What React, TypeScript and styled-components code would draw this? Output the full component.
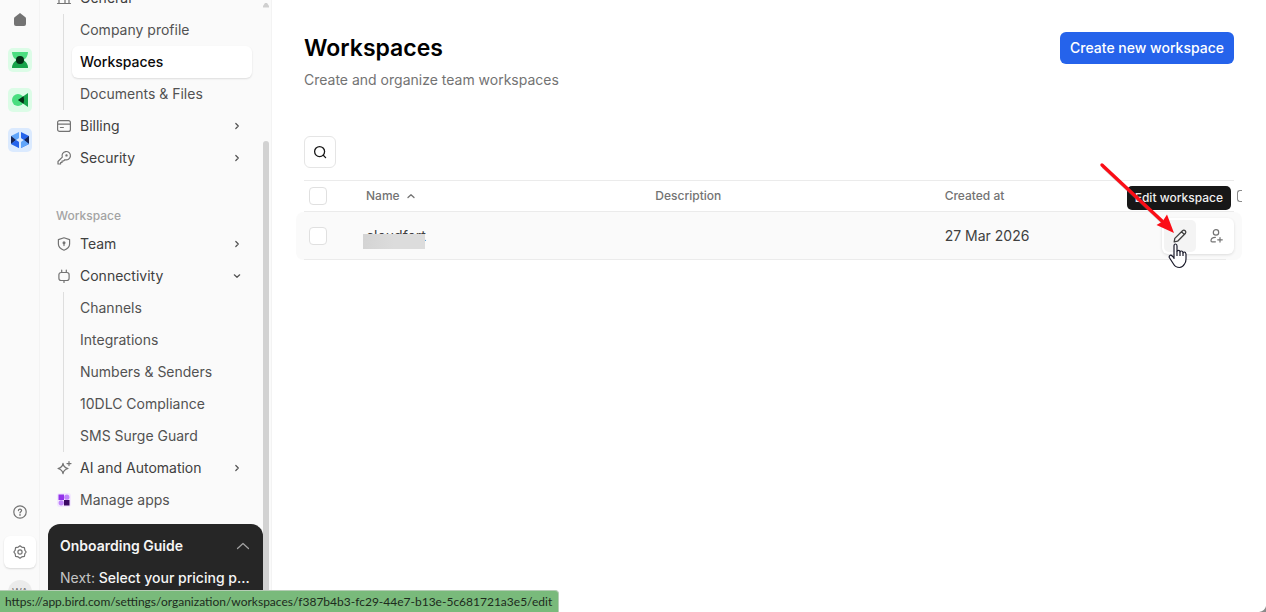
import React from "react";
import styled, { createGlobalStyle, css } from "styled-components";

const GlobalStyle = createGlobalStyle`
  *, *::before, *::after { box-sizing: border-box; }
  body {
    margin: 0;
    background: #ffffff;
    color: #171717;
    font-family: Inter, "Liberation Sans", sans-serif;
    font-size: 14px;
    line-height: 20px;
  }
  button { font: inherit; border: 0; padding: 0; background: none; color: inherit; cursor: pointer; }
  a { color: inherit; text-decoration: none; }
  ul { list-style: none; margin: 0; padding: 0; }
`;

const Shell = styled.div`
  position: relative;
  display: flex;
  height: 100vh;
  overflow: hidden;
`;

/* ---------- icon rail ---------- */

const Rail = styled.nav`
  display: flex;
  flex-direction: column;
  flex: none;
  width: 40px;
  background: #fafafa;
  border-right: 1px solid #f3f3f3;
`;

const RailLink = styled.a`
  display: flex;
  align-items: center;
  justify-content: center;
  flex: none;
  width: 40px;
  height: 40px;
  color: #737373;
`;

const RailSpacer = styled.div`
  flex: 1;
`;

const AppTile = styled.span<{ $tint: string }>`
  display: flex;
  width: 24px;
  height: 24px;
  border-radius: 5px;
  background: ${(p) => p.$tint};
`;

const ActiveTile = styled.span`
  display: flex;
  align-items: center;
  justify-content: center;
  width: 32px;
  height: 32px;
  border-radius: 6px;
  background: #ffffff;
  box-shadow: 0 1px 2px rgba(0, 0, 0, 0.14);
`;

const Avatar = styled.span`
  width: 24px;
  height: 24px;
  border-radius: 50%;
  background: #ebebeb;
  color: #737373;
  font-size: 10px;
  line-height: 24px;
  text-align: center;
`;

/* ---------- sidebar ---------- */

const Sidebar = styled.aside`
  display: flex;
  flex: none;
  width: 232px;
  background: #fafafa;
  border-right: 1px solid #f3f3f3;
`;

const SidebarColumn = styled.div`
  display: flex;
  flex-direction: column;
  flex: 1;
  min-width: 0;
`;

const NavScroll = styled.nav`
  flex: 1;
  min-height: 0;
  overflow: hidden;
  padding: 0 11px 0 8px;
`;

const NavList = styled.ul<{ $scrolled?: boolean }>`
  margin-top: ${(p) => (p.$scrolled ? "-18px" : "0")};
`;

const navRow = css`
  display: flex;
  align-items: center;
  width: 100%;
  height: 32px;
  text-align: left;
`;

const NavButton = styled.button`
  && {
    ${navRow}
    padding: 0 7px 0 8px;
    color: #404040;
  }
`;

const NavLink = styled.a`
  ${navRow}
  padding: 0 8px;
  color: #525252;
`;

const NavIcon = styled.span`
  display: flex;
  flex: none;
  width: 16px;
  margin-right: 8px;
  color: #737373;
`;

const NavText = styled.span`
  flex: 1;
`;

const NavChevron = styled.span`
  display: flex;
  color: #525252;
`;

const SubList = styled.ul`
  margin-left: 15px;
  padding-left: 8px;
  border-left: 1px solid #dedede;
`;

const SubLink = styled.a<{ $active?: boolean }>`
  && {
    display: block;
    height: 32px;
    padding: 0 8px;
    border-radius: 6px;
    line-height: 32px;
    font-weight: ${(p) => (p.$active ? 500 : 400)};
    color: ${(p) => (p.$active ? "#0a0a0a" : "#525252")};
    background: ${(p) => (p.$active ? "#ffffff" : "transparent")};
    box-shadow: ${(p) => (p.$active ? "0 1px 2px rgba(0, 0, 0, 0.12)" : "none")};
  }
`;

const SectionLabel = styled.h2`
  margin: 32px 0 2px;
  padding: 0 8px;
  color: #a3a3a3;
  font-size: 12px;
  font-weight: 500;
  line-height: 20px;
`;

const Guide = styled.section`
  flex: none;
  height: 88px;
  margin-left: 8px;
  padding: 6px 12px 0;
  border-radius: 12px 12px 0 0;
  background: #262626;
  color: #f5f5f5;
`;

const GuideToggle = styled.button`
  && {
    display: flex;
    align-items: center;
    justify-content: space-between;
    width: 100%;
    height: 32px;
    font-weight: 600;
  }
`;

const GuideNext = styled.p`
  margin: 0;
  overflow: hidden;
  line-height: 32px;
  font-weight: 500;
  white-space: nowrap;
  text-overflow: ellipsis;
  span { color: #c4c4c4; font-weight: 400; }
`;

const ScrollTrack = styled.div`
  display: flex;
  flex-direction: column;
  flex: none;
  width: 8px;
  padding-right: 2px;
`;

const ScrollThumb = styled.div`
  flex: 1;
  margin-top: 133px;
  border-radius: 3px 3px 0 0;
  background: #d2d2d2;
`;

/* ---------- main area ---------- */

const Main = styled.main`
  flex: 1;
  min-width: 0;
  padding: 32px 32px 0;
`;

const PageHeader = styled.header`
  display: flex;
  align-items: flex-start;
  justify-content: space-between;
`;

const Title = styled.h1`
  margin: 0;
  color: #000000;
  font-size: 23px;
  font-weight: 600;
  line-height: 32px;
`;

const Subtitle = styled.p`
  margin: 6px 0 0;
  color: #737373;
`;

const PrimaryButton = styled.button`
  && {
    height: 32px;
    padding: 0 10px;
    border-radius: 6px;
    background: #2563eb;
    color: #ffffff;
    font-weight: 500;
  }
`;

const SearchButton = styled.button`
  && {
    display: flex;
    align-items: center;
    justify-content: center;
    width: 32px;
    height: 32px;
    margin: 46px 0 12px;
    border: 1px solid #e5e5e5;
    border-radius: 6px;
    background: #ffffff;
    color: #171717;
  }
`;

const TableClip = styled.div`
  margin: 0 -8px;
`;

const Table = styled.table`
  display: block;
  width: 100%;
`;

const TableHead = styled.thead`
  display: block;
  margin: 0 8px;
  border-top: 1px solid #ebebeb;
  border-bottom: 1px solid #ebebeb;
`;

const TableBody = styled.tbody`
  display: block;
`;

const Row = styled.tr<{ $hovered?: boolean }>`
  position: relative;
  display: grid;
  grid-template-columns: 62px repeat(3, minmax(0, 1fr));
  align-items: center;
  height: 30px;
  ${(p) =>
    p.$hovered &&
    css`
      height: 48px;
      padding: 0 8px;
      border-radius: 8px;
      background: linear-gradient(#ebebeb, #ebebeb) 8px 100% / calc(100% - 24px) 1px no-repeat #fafafa;
    `}
`;

const HeadCell = styled.th`
  display: flex;
  align-items: center;
  gap: 6px;
  padding: 0;
  color: #737373;
  font-size: 12px;
  font-weight: 500;
`;

const Cell = styled.td`
  display: flex;
  padding: 0;
  color: #404040;
`;

const CheckBox = styled.input`
  appearance: none;
  width: 18px;
  height: 18px;
  margin: 0 0 0 5px;
  border: 1px solid #e0e0e0;
  border-radius: 4px;
  background: #ffffff;
`;

const Redacted = styled.span`
  position: relative;
  &::after {
    content: "";
    position: absolute;
    top: 8px;
    left: -3px;
    width: 62px;
    height: 15px;
    background: linear-gradient(90deg, #d4d4d4, #dcdcdc 50%);
  }
`;

const ColumnPicker = styled.td`
  position: absolute;
  top: 9px;
  right: -8px;
  width: 5px;
  height: 12px;
  padding: 0;
  border: 1px solid #8a8a8a;
  border-right: 0;
  border-radius: 3px 0 0 3px;
`;

const RowActions = styled.td`
  position: absolute;
  top: 6px;
  right: 8px;
  display: flex;
  gap: 4px;
  padding: 2px;
  border-radius: 6px;
  background: #ffffff;
  box-shadow: 0 1px 3px rgba(0, 0, 0, 0.12);
`;

const IconButton = styled.button<{ $hovered?: boolean }>`
  && {
    display: flex;
    align-items: center;
    justify-content: center;
    width: 32px;
    height: 32px;
    border-radius: 5px;
    background: ${(p) => (p.$hovered ? "#f4f4f4" : "transparent")};
    color: ${(p) => (p.$hovered ? "#404040" : "#737373")};
  }
`;

const Tooltip = styled.span`
  position: absolute;
  right: 3px;
  bottom: 44px;
  height: 24px;
  padding: 0 8px;
  border-radius: 5px;
  background: #171717;
  color: #f0f0f0;
  font-size: 12px;
  font-weight: 500;
  line-height: 24px;
  white-space: nowrap;
`;

const Pointer = styled.svg`
  position: absolute;
  top: 25px;
  right: 46px;
  z-index: 2;
`;

const ArrowMark = styled.svg`
  position: absolute;
  right: 56px;
  bottom: 18px;
  z-index: 2;
`;

const StatusBar = styled.div`
  position: absolute;
  left: 0;
  bottom: 0;
  height: 22px;
  padding: 0 6px 0 5px;
  border-top: 1px solid #b5cdb5;
  border-right: 1px solid #b5cdb5;
  border-radius: 0 4px 0 0;
  background: #79ba7b;
  color: #1d2b1d;
  font-family: Lato, "Noto Sans", sans-serif;
  font-size: 12px;
  line-height: 22px;
  white-space: nowrap;
`;

const ResizeCorner = styled.svg`
  position: absolute;
  right: 0;
  bottom: 0;
`;

/* ---------- icons ---------- */

const Icon = ({ size = 16, children }: { size?: number; children: React.ReactNode }) => (
  <svg width={size} height={size} viewBox={`0 0 ${size} ${size}`} fill="none" stroke="currentColor"
    strokeWidth="1.2" strokeLinecap="round" strokeLinejoin="round" aria-hidden="true">
    {children}
  </svg>
);

const HomeIcon = () => (
  <Icon><path d="M8 1 13.4 5.2Q14 5.7 14 6.500V12Q14 14 12 14H4Q2 14 2 12V6.500Q2 5.700 2.600 5.200Z" fill="currentColor" stroke="none" /></Icon>
);
const BuildingIcon = () => (
  <Icon><path d="M1.500 13.500h13M3 13.500V5h6v8.500M9 7h4v6.500" /></Icon>
);
const CardIcon = () => (
  <Icon><rect x="1.600" y="2.600" width="12.800" height="10.800" rx="2" /><path d="M1.600 6.200h12.800M4.400 9.500h3" /></Icon>
);
const KeyIcon = () => (
  <Icon>
    <path d="M6.300 7.200A4.200 4.200 0 1 1 8.900 9.700L7.500 11H6v1.500H4.600V14H2v-2.500Z" />
    <circle cx="10.500" cy="5.400" r="0.600" fill="currentColor" />
  </Icon>
);
const ShieldIcon = () => (
  <Icon>
    <path d="M8 1.800 13.600 3.600V8c0 3-2.300 5-5.600 6.200C4.700 13 2.400 11 2.400 8V3.600Z" />
    <circle cx="8" cy="6.700" r="1.500" fill="currentColor" stroke="none" /><path d="M8 7v2.600" />
  </Icon>
);
const PlugIcon = () => (
  <Icon><rect x="2.900" y="4.500" width="10.200" height="8" rx="2.200" /><path d="M5.700 4.300V2M10.300 4.300V2M8 12.700V14.400" /></Icon>
);
const SparkleIcon = () => (
  <Icon>
    <path d="M7 3.300C7.500 6.500 8.500 7.700 12 8.500 8.500 9.300 7.500 10.500 7 13.700 6.500 10.500 5.500 9.300 2 8.500 5.500 7.700 6.500 6.500 7 3.300Z" />
    <path d="M13 1.600v4M11 3.600h4" />
  </Icon>
);
const AppsIcon = () => (
  <Icon>
    <rect x="1" y="1" width="14" height="14" rx="3" fill="#f3e8ff" stroke="none" />
    <rect x="2.500" y="2.500" width="5.500" height="5.500" fill="#9333ea" stroke="none" />
    <circle cx="10.800" cy="5.200" r="2.600" fill="#c084fc" stroke="none" />
    <circle cx="5.200" cy="10.800" r="2.600" fill="#c084fc" stroke="none" />
    <rect x="8" y="8" width="5.500" height="5.500" fill="#3b0764" stroke="none" />
  </Icon>
);
const ChevronRight = () => <Icon><path d="M6.800 5.500 9.300 8 6.800 10.500" /></Icon>;
const ChevronDown = () => <Icon><path d="M5.300 6.800 8 9.300 10.700 6.800" /></Icon>;
const HelpIcon = () => (
  <Icon>
    <circle cx="8" cy="8" r="6.200" />
    <path d="M6.400 6.600C6.400 4.600 9.600 4.600 9.600 6.500 9.600 7.700 8 7.700 8 8.900" />
    <circle cx="8" cy="10.900" r="0.300" fill="currentColor" />
  </Icon>
);
const GearIcon = () => (
  <Icon>
    <path d="M8 1.800 9.700 3.100 12.400 3.600 12.900 6.300 14.200 8 12.900 9.700 12.400 12.400 9.700 12.900 8 14.200 6.300 12.900 3.600 12.400 3.100 9.700 1.800 8 3.100 6.300 3.600 3.600 6.300 3.100Z" />
    <circle cx="8" cy="8" r="2.100" />
  </Icon>
);
const SearchIcon = () => (
  <Icon><circle cx="7.600" cy="7.600" r="5" strokeWidth="1.300" /><path d="M11.300 11.300 13.600 13.600" strokeWidth="1.300" /></Icon>
);
const SortIcon = () => <Icon size={10}><path d="M2 6.500 5 3.700 8 6.500" strokeWidth="1.300" /></Icon>;
const PencilIcon = () => (
  <Icon><path d="M2.200 13.800 2.800 10.400 10.500 2.700Q11.900 1.500 13.200 2.800 14.500 4.100 13.300 5.500L5.600 13.200ZM9.600 3.800 12.200 6.400" strokeWidth="1.300" /></Icon>
);
const AddPersonIcon = () => (
  <Icon>
    <circle cx="8" cy="4.400" r="2.700" />
    <path d="M7.400 9.300C4.500 9.300 3 10.700 3 12.700Q3 13.800 4.100 13.800H7.400M12 9.500v4.600M9.700 11.800h4.600" />
  </Icon>
);

const HourglassLogo = () => (
  <svg width="24" height="24" viewBox="0 0 24 24" aria-hidden="true">
    <path d="M4 4H20Q20 9 15.500 12H8.500Q4 9 4 4Z" fill="#4ade80" />
    <path d="M8.500 12H15.500Q20 15 20 20H4Q4 15 8.500 12Z" fill="#16a34a" />
    <circle cx="12" cy="12" r="4" fill="#052e16" />
  </svg>
);
const MegaphoneLogo = () => (
  <svg width="24" height="24" viewBox="0 0 24 24" aria-hidden="true">
    <circle cx="10" cy="12" r="6" fill="#4ade80" />
    <path d="M20 5V19L10 12Z" fill="#16a34a" />
    <path d="M10 12 15.500 8.200Q16.700 12 15.500 15.800Z" fill="#052e16" />
  </svg>
);
const HexLogo = () => (
  <svg width="24" height="24" viewBox="0 0 24 24" aria-hidden="true">
    <path d="M11 4V20L3 16V8Z" fill="#60a5fa" />
    <path d="M13 4V20L21 16V8Z" fill="#2563eb" />
    <path d="M3 8 8 12 3 16Z" fill="#172554" />
    <path d="M3 16 8 12 11 13V20Z" fill="#2563eb" />
    <path d="M21 8 16 12 21 16Z" fill="#172554" />
    <path d="M21 16 16 12 13 13V20Z" fill="#60a5fa" />
    <path d="M12 8 13.500 10.500 16 12 13.500 13.500 12 16 10.500 13.500 8 12 10.500 10.500Z" fill="#dbeafe" />
  </svg>
);

/* ---------- page ---------- */

const generalLinks = ["Company profile", "Workspaces", "Documents & Files"];
const connectivityLinks = ["Channels", "Integrations", "Numbers & Senders", "10DLC Compliance", "SMS Surge Guard"];

function NavGroup({ icon, label, open, links = [], active }: {
  icon: React.ReactNode; label: string; open?: boolean; links?: string[]; active?: string;
}) {
  return (
    <li>
      <NavButton type="button" aria-expanded={!!open}>
        <NavIcon>{icon}</NavIcon>
        <NavText>{label}</NavText>
        <NavChevron>{open ? <ChevronDown /> : <ChevronRight />}</NavChevron>
      </NavButton>
      {open && (
        <SubList>
          {links.map((link) => (
            <li key={link}><SubLink href="#" $active={link === active}>{link}</SubLink></li>
          ))}
        </SubList>
      )}
    </li>
  );
}

export default function App() {
  return (
    <>
      <GlobalStyle />
      <Shell>
        <Rail aria-label="Apps">
          <RailLink href="#" aria-label="Home"><HomeIcon /></RailLink>
          <RailLink href="#" aria-label="CRM"><AppTile $tint="#dcfce7"><HourglassLogo /></AppTile></RailLink>
          <RailLink href="#" aria-label="Marketing"><AppTile $tint="#dcfce7"><MegaphoneLogo /></AppTile></RailLink>
          <RailLink href="#" aria-label="Developers"><AppTile $tint="#dbeafe"><HexLogo /></AppTile></RailLink>
          <RailSpacer />
          <RailLink href="#" aria-label="Help"><HelpIcon /></RailLink>
          <RailLink href="#" aria-label="Settings"><ActiveTile><GearIcon /></ActiveTile></RailLink>
          <RailLink href="#" aria-label="Account"><Avatar>WA</Avatar></RailLink>
        </Rail>

        <Sidebar>
          <SidebarColumn>
            <NavScroll aria-label="Settings">
              <NavList $scrolled>
                <NavGroup icon={<BuildingIcon />} label="General" open links={generalLinks} active="Workspaces" />
                <NavGroup icon={<CardIcon />} label="Billing" />
                <NavGroup icon={<KeyIcon />} label="Security" />
              </NavList>
              <SectionLabel>Workspace</SectionLabel>
              <NavList>
                <NavGroup icon={<ShieldIcon />} label="Team" />
                <NavGroup icon={<PlugIcon />} label="Connectivity" open links={connectivityLinks} />
                <NavGroup icon={<SparkleIcon />} label="AI and Automation" />
                <li><NavLink href="#"><NavIcon><AppsIcon /></NavIcon>Manage apps</NavLink></li>
              </NavList>
            </NavScroll>
            <Guide>
              <GuideToggle type="button">
                Onboarding Guide
                <Icon><path d="M2.500 10.500 8 5.500 13.500 10.500" stroke="#a3a3a3" /></Icon>
              </GuideToggle>
              <GuideNext><span>Next:</span> Select your pricing plan</GuideNext>
            </Guide>
          </SidebarColumn>
          <ScrollTrack>
            <svg width="6" height="8" viewBox="0 0 6 8" aria-hidden="true"><path d="M0 7.500V6L2 3H4L6 6V7.500Z" fill="#cfcfcf" /></svg>
            <ScrollThumb />
          </ScrollTrack>
        </Sidebar>

        <Main>
          <PageHeader>
            <div>
              <Title>Workspaces</Title>
              <Subtitle>Create and organize team workspaces</Subtitle>
            </div>
            <PrimaryButton type="button">Create new workspace</PrimaryButton>
          </PageHeader>
          <SearchButton type="button" aria-label="Search"><SearchIcon /></SearchButton>
          <TableClip>
            <Table>
              <TableHead>
                <Row>
                  <HeadCell><CheckBox type="checkbox" aria-label="Select all" /></HeadCell>
                  <HeadCell>Name <SortIcon /></HeadCell>
                  <HeadCell>Description</HeadCell>
                  <HeadCell>Created at</HeadCell>
                  <ColumnPicker />
                </Row>
              </TableHead>
              <TableBody>
                <Row $hovered>
                  <Cell><CheckBox type="checkbox" aria-label="Select workspace" /></Cell>
                  <Cell><Redacted>cloudfort</Redacted></Cell>
                  <Cell />
                  <Cell>27 Mar 2026</Cell>
                  <RowActions>
                    <IconButton type="button" $hovered aria-label="Edit workspace"><PencilIcon /></IconButton>
                    <IconButton type="button" aria-label="Add member"><AddPersonIcon /></IconButton>
                    <Tooltip role="tooltip">Edit workspace</Tooltip>
                    <ArrowMark width="80" height="76" viewBox="0 0 80 76" aria-hidden="true">
                      <path d="M5 7 65 63" stroke="#7a7a7a" strokeWidth="3" opacity="0.35" />
                      <path d="M4 5 64 61" stroke="#fb0d16" strokeWidth="3.400" strokeLinecap="round" />
                      <path d="M76 73 58.500 65 64.500 61.500 69 54.500Z" fill="#fb0d16" />
                    </ArrowMark>
                    <Pointer width="20" height="26" viewBox="0 0 20 26" aria-hidden="true">
                      <path d="M6 15.500V3Q6 1 7.500 1T9 3V8.500Q9.200 7.300 10.500 7.300T12 9Q12.200 8 13.400 8T15 9.800Q15.200 9 16.400 9T18 11V16Q18 19 16.500 21 14.500 24.500 11.500 24.500 7.500 24.500 5.500 21L1.300 14.500Q.8 12.700 2.400 12.200 3.800 12 6 15Z" fill="#fff" stroke="#1a1a2a" strokeWidth="1.200" strokeLinejoin="round" />
                      <path d="M9 8.500V13M12 9V13M15 10V13" stroke="#1a1a2a" strokeWidth="1.200" />
                    </Pointer>
                  </RowActions>
                </Row>
              </TableBody>
            </Table>
          </TableClip>
        </Main>

        <StatusBar>https://app.bird.com/settings/organization/workspaces/f387b4b3-fc29-44e7-b13e-5c681721a3e5/edit</StatusBar>
        <ResizeCorner width="7" height="6" viewBox="0 0 7 6" aria-hidden="true"><path d="M7 0V6H0Q6 5 7 0Z" fill="#8a8a8a" /></ResizeCorner>
      </Shell>
    </>
  );
}
